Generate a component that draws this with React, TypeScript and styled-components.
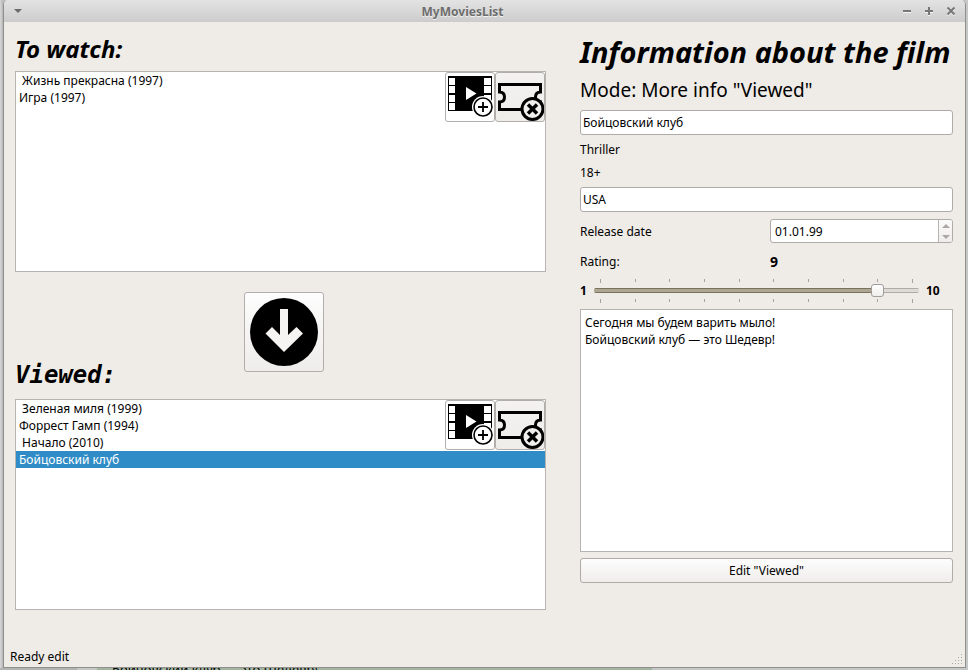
import React, { useState } from "react";
import styled, { createGlobalStyle } from "styled-components";

const GlobalStyle = createGlobalStyle`
  *, *::before, *::after { box-sizing: border-box; }
  body {
    margin: 0;
    font: 12px/17px "Noto Sans", sans-serif;
    color: #000;
    background: #c6c8c7;
  }
  input, textarea, button { font: inherit; color: inherit; margin: 0; }
  h1, h2, p, ul { margin: 0; padding: 0; }
`;

const Desktop = styled.div`
  display: flex;
  flex-direction: column;
  height: 100vh;
  background: linear-gradient(90deg, #d8d8d8 0, #b4b6b5 3px, #c6c8c7 4px);
`;

const AppWindow = styled.div`
  flex: 1;
  min-height: 0;
  display: flex;
  flex-direction: column;
  margin: 0 2px 0 3px;
  border: 1px solid #8f8f8d;
  border-top: 0;
  border-radius: 5px 5px 0 0;
  background: #efebe7;
  overflow: hidden;
`;

const Behind = styled.div`
  height: 2px;
  display: flex;
  overflow: hidden;
  padding-left: 97px;
  background: linear-gradient(90deg, #b2b3b3 0, #b2b3b3 77px, #c6c8c7 77px);
`;

const BehindText = styled.div`
  flex: 0 0 555px;
  display: flex;
  align-items: center;
  height: 2px;
  padding-left: 15px;
  font-size: 13px;
  background: #a3b5a0;
`;

const TitleBar = styled.header`
  display: grid;
  grid-template-columns: 22px 1fr 66px;
  align-items: center;
  flex: 0 0 22px;
  background: linear-gradient(#e3e3e3, #cccccc);
`;

const Caption = styled.h1`
  font-size: 12px;
  line-height: 20px;
  padding-top: 2px;
  font-weight: 700;
  text-align: center;
  color: #6d6d6d;
  text-shadow: 0 1px 0 #f2f2f2;
`;

const WindowControls = styled.div<{ $end?: boolean }>`
  display: flex;
  justify-content: ${(p) => (p.$end ? "flex-end" : "flex-start")};
  padding: ${(p) => (p.$end ? "0 3px 0 0" : "0 0 0 3px")};
`;

const ControlButton = styled.button`
  flex: 0 0 22px;
  height: 22px;
  padding: 0;
  border: 0;
  background: none;
  display: grid;
  place-items: center;
  svg { display: block; }
`;

const Content = styled.main`
  flex: 1;
  min-height: 0;
  display: grid;
  grid-template-columns: 531fr 373fr;
  column-gap: 34px;
  padding: 10px 12px 0 11px;
`;

const Column = styled.section`
  display: flex;
  flex-direction: column;
  min-width: 0;
  min-height: 0;
`;

const Heading = styled.h2<{ $mono?: boolean }>`
  font-family: ${(p) => (p.$mono ? '"DejaVu Sans Mono", monospace' : '"Noto Sans", sans-serif')};
  font-size: 24px;
  line-height: 34px;
  font-style: italic;
  font-weight: 700;
`;

const ToWatchHeading = styled(Heading)`
  margin-bottom: 5px;
`;

const ListFrame = styled.div<{ $grow: number }>`
  flex: ${(p) => p.$grow} 1 0;
  min-height: 0;
  position: relative;
  border: 1px solid #b6b3b0;
  background: #fff;
`;

const Movies = styled.ul`
  list-style: none;
`;

const Movie = styled.li<{ $selected?: boolean }>`
  padding-left: 3px;
  white-space: pre;
  background: ${(p) => (p.$selected ? "#308cc6" : "transparent")};
  color: ${(p) => (p.$selected ? "#fff" : "#000")};
`;

const ListTools = styled.div`
  position: absolute;
  top: 0;
  right: 0;
  display: flex;
`;

const PushButton = styled.button`
  padding: 0;
  border: 1px solid #b1aeab;
  border-radius: 3px;
  background: linear-gradient(#fdfdfd, #efedeb);
  svg { display: block; margin: auto; }
`;

const ToolButton = styled(PushButton)<{ $light?: boolean }>`
  width: 50px;
  height: 50px;
  background: ${(p) => (p.$light ? "#fff" : "linear-gradient(#f3f2f0, #efedea)")};
`;

const MoveRow = styled.div`
  display: grid;
  grid-template-columns: 229px auto 1fr;
  margin: 20px 0 7px;
  height: 100px;
`;

const ViewedHeading = styled(Heading)`
  align-self: end;
`;

const MoveButton = styled(PushButton)`
  width: 80px;
  height: 80px;
`;

const InfoTitle = styled.h2`
  font-size: 29px;
  line-height: 40px;
  font-style: italic;
  font-weight: 700;
  white-space: nowrap;
`;

const Mode = styled.p`
  font-size: 19px;
  line-height: 28px;
  margin: 4px 0 6px;
`;

const Details = styled(Column)`
  padding-bottom: 27px;
`;

const TextField = styled.input`
  width: 100%;
  height: 25px;
  padding: 0 2px;
  border: 1px solid #aeaba8;
  border-radius: 3px;
  background: #fff;
`;

const Fact = styled.p`
  margin-top: 6px;
`;

const CountryField = styled(TextField)`
  margin-top: 6px;
`;

const FormRow = styled.div`
  display: grid;
  grid-template-columns: 190fr 183fr;
  align-items: center;
  margin-top: 7px;
`;

const DateBox = styled.div`
  display: flex;
  height: 24px;
  border: 1px solid #aeaba8;
  border-radius: 3px;
  background: #fff;
  overflow: hidden;
`;

const DateInput = styled.input`
  flex: 1;
  min-width: 0;
  border: 0;
  padding: 0 4px;
  background: none;
`;

const Spinner = styled.div`
  width: 14px;
  display: flex;
  flex-direction: column;
  border-left: 1px solid #b6b3b0;
  background: linear-gradient(#fbfafa, #efedeb);
`;

const SpinButton = styled.button`
  flex: 1;
  padding: 0;
  border: 0;
  background: none;
  display: grid;
  place-items: center;
  svg { display: block; }
`;

const RatingRow = styled(FormRow)`
  margin-top: 9px;
  line-height: 20px;
`;

const RatingValue = styled.output`
  font-size: 14px;
  font-weight: 700;
`;

const SliderRow = styled.div`
  display: grid;
  grid-template-columns: 14px 1fr 27px;
  align-items: center;
  margin-top: 7px;
  font-weight: 700;
`;

const SliderBody = styled.div`
  display: flex;
  flex-direction: column;
  padding-right: 7px;
`;

const Ticks = styled.div`
  display: flex;
  justify-content: space-between;
  padding: 0 6px;
  height: 3px;
  i { width: 1px; height: 3px; background: #a5a29f; }
  i:first-child, i:last-child { height: 4px; }
`;

const Slider = styled.input<{ $fill: number }>`
  appearance: none;
  display: block;
  width: 100%;
  height: 13px;
  margin: 2px 0;
  background: none;
  &::-webkit-slider-runnable-track {
    height: 5px;
    border-radius: 2px;
    background:
      linear-gradient(#77715f 0 1px, #aea691 1px 4px, #77715f 4px) 0 0 / ${(p) => p.$fill}% 100% no-repeat,
      linear-gradient(#aeaba8 0 1px, #dedad6 1px 4px, #aeaba8 4px);
  }
  &::-webkit-slider-thumb {
    appearance: none;
    width: 13px;
    height: 13px;
    margin-top: -4px;
    border: 1px solid #a09d9a;
    border-radius: 3px;
    background: linear-gradient(#fff, #f0eeec);
  }
`;

const Review = styled.textarea`
  flex: 1;
  min-height: 60px;
  width: 100%;
  margin-top: 7px;
  padding: 4px;
  border: 1px solid #b6b3b0;
  background: #fff;
  resize: none;
  display: block;
`;

const EditButton = styled(PushButton)`
  height: 25px;
  margin-top: 6px;
  border-color: #aeaba8;
`;

const StatusBar = styled.footer`
  display: flex;
  justify-content: space-between;
  align-items: flex-end;
  flex: 0 0 57px;
  padding: 0 2px 2px 6px;
`;

const ReelIcon = () => (
  <svg width="48" height="48" viewBox="0 0 48 48" aria-hidden="true">
    <rect x="2" y="3" width="44" height="35" fill="#000" />
    <g fill="#fff">
      {[5, 13, 22, 30].map((y) => (
        <React.Fragment key={y}>
          <rect x="3" y={y} width="6" height="7" />
          <rect x="38" y={y} width="7" height="7" />
        </React.Fragment>
      ))}
      <path d="M20 14v13l10.500-6.500z" />
      <circle cx="37" cy="34" r="11" />
    </g>
    <circle cx="37" cy="34" r="9" fill="#fff" stroke="#000" strokeWidth="1.600" />
    <path d="M37 29v10M32 34h10" stroke="#000" strokeWidth="1.800" />
  </svg>
);

const TicketIcon = () => (
  <svg width="48" height="48" viewBox="0 0 48 48" aria-hidden="true">
    <path
      d="M3.500 11.500H44.500V19Q39.500 19 39.500 24T44.500 29V36.500H3.500V29Q8.500 29 8.500 24T3.500 19Z"
      fill="none"
      stroke="#000"
      strokeWidth="3"
    />
    <circle cx="36.500" cy="36" r="10.500" fill="#f1efed" stroke="#000" strokeWidth="3" />
    <path d="M32 31.500l9 9M41 31.500l-9 9" stroke="#000" strokeWidth="3.500" />
  </svg>
);

const Triangle = ({ up, size, color }: { up?: boolean; size: number; color: string }) => (
  <svg width={size} height={size / 2} viewBox="0 0 8 4" aria-hidden="true">
    <path d={up ? "M0 4L4 0L8 4Z" : "M0 0H8L4 4Z"} fill={color} />
  </svg>
);

const ControlIcon = ({ d }: { d: string }) => (
  <svg width="10" height="10" viewBox="0 0 10 10" aria-hidden="true">
    <path d={d} transform="translate(0 1)" stroke="#f4f4f4" strokeWidth="2" fill="none" />
    <path d={d} stroke="#777" strokeWidth="2" fill="none" />
  </svg>
);

type MovieListProps = { label: string; grow: number; movies: string[]; selected?: string };

const MovieList = ({ label, grow, movies, selected }: MovieListProps) => (
  <ListFrame $grow={grow}>
    <Movies aria-label={label}>
      {movies.map((m) => (
        <Movie key={m} $selected={m === selected}>{m}</Movie>
      ))}
    </Movies>
    <ListTools>
      <ToolButton $light aria-label="Add film"><ReelIcon /></ToolButton>
      <ToolButton aria-label="Remove film"><TicketIcon /></ToolButton>
    </ListTools>
  </ListFrame>
);

const TickMarks = () => (
  <Ticks aria-hidden="true">
    {Array.from({ length: 10 }, (_, i) => <i key={i} />)}
  </Ticks>
);

export default function App() {
  const [rating, setRating] = useState(9);
  return (
    <Desktop>
      <GlobalStyle />
      <AppWindow>
        <TitleBar>
          <WindowControls>
            <ControlButton aria-label="Window menu"><Triangle size={8} color="#6b6b6b" /></ControlButton>
          </WindowControls>
          <Caption>MyMoviesList</Caption>
          <WindowControls $end>
            <ControlButton aria-label="Minimize"><ControlIcon d="M1 5H9" /></ControlButton>
            <ControlButton aria-label="Maximize"><ControlIcon d="M1 5H9M5 1V9" /></ControlButton>
            <ControlButton aria-label="Close"><ControlIcon d="M1.500 1.500L8.500 8.500M8.500 1.500L1.500 8.500" /></ControlButton>
          </WindowControls>
        </TitleBar>
        <Content>
          <Column>
            <ToWatchHeading>To watch:</ToWatchHeading>
            <MovieList label="To watch" grow={201} movies={[" Жизнь прекрасна (1997)", "Игра (1997)"]} />
            <MoveRow>
              <ViewedHeading $mono>Viewed:</ViewedHeading>
              <MoveButton aria-label="Move to viewed">
                <svg width="68" height="68" viewBox="0 0 68 68" aria-hidden="true">
                  <circle cx="34" cy="34" r="34" fill="#000" />
                  <path d="M30 11H38V37L46.500 29L53 35.500L34 54L15.500 35.500L22 29L30 37Z" fill="#f5f4f3" />
                </svg>
              </MoveButton>
            </MoveRow>
            <MovieList
              label="Viewed"
              grow={211}
              movies={[" Зеленая миля (1999)", "Форрест Гамп (1994)", " Начало (2010)", "Бойцовский клуб"]}
              selected="Бойцовский клуб"
            />
          </Column>
          <Details>
            <InfoTitle>Information about the film</InfoTitle>
            <Mode>Mode: More info "Viewed"</Mode>
            <TextField aria-label="Title" defaultValue="Бойцовский клуб" />
            <Fact>Thriller</Fact>
            <Fact>18+</Fact>
            <CountryField aria-label="Country" defaultValue="USA" />
            <FormRow>
              <label htmlFor="release">Release date</label>
              <DateBox>
                <DateInput id="release" defaultValue="01.01.99" />
                <Spinner>
                  <SpinButton aria-label="Later"><Triangle up size={8} color="#aaa7a4" /></SpinButton>
                  <SpinButton aria-label="Earlier"><Triangle size={8} color="#aaa7a4" /></SpinButton>
                </Spinner>
              </DateBox>
            </FormRow>
            <RatingRow>
              <label htmlFor="rating">Rating:</label>
              <RatingValue htmlFor="rating">{rating}</RatingValue>
            </RatingRow>
            <SliderRow>
              <span>1</span>
              <SliderBody>
                <TickMarks />
                <Slider
                  id="rating"
                  type="range"
                  min={1}
                  max={10}
                  value={rating}
                  $fill={((rating - 1) / 9) * 100}
                  onChange={(e) => setRating(Number(e.target.value))}
                />
                <TickMarks />
              </SliderBody>
              <span>10</span>
            </SliderRow>
            <Review aria-label="Review" defaultValue={"Сегодня мы будем варить мыло!\nБойцовский клуб — это Шедевр!"} />
            <EditButton>Edit "Viewed"</EditButton>
          </Details>
        </Content>
        <StatusBar>
          <span>Ready edit</span>
          <svg width="12" height="12" viewBox="0 0 12 12" aria-hidden="true">
            <path
              d="M10 1h1M7 4h1M10 4h1M4 7h1M7 7h1M10 7h1M1 10h1M4 10h1M7 10h1M10 10h1"
              stroke="#aaa7a4"
              strokeWidth="1"
              transform="translate(0 0.500)"
            />
          </svg>
        </StatusBar>
      </AppWindow>
      <Behind aria-hidden="true">
        <BehindText>Бойцовский клуб — это Шедевр!</BehindText>
      </Behind>
    </Desktop>
  );
}
